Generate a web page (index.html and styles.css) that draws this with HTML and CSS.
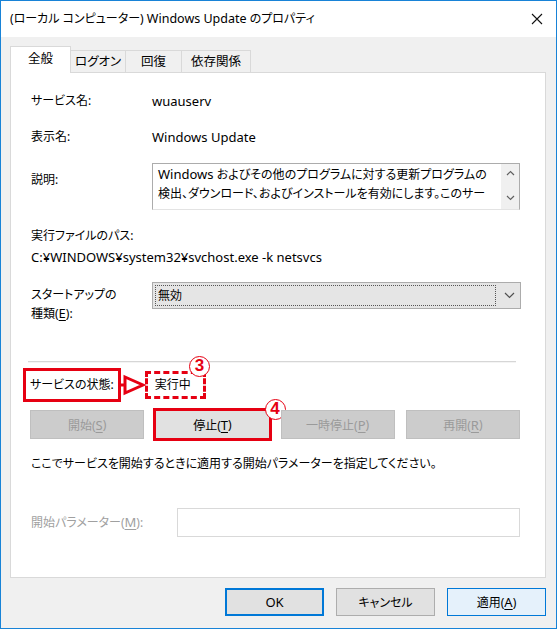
FILE: index.html
```html
<!DOCTYPE html>
<html lang="ja">
<head>
<meta charset="utf-8">
<title>Windows Update のプロパティ</title>
<link rel="stylesheet" href="styles.css">
</head>
<body>
<div class="window">
  <div class="titlebar">
    <span class="title">(ローカル コンピューター) <span class="en">Windows Update</span> のプロパティ</span>
    <svg class="close" width="12" height="12" viewBox="0 0 12 12"><path d="M1 1L11 11M11 1L1 11" stroke="#111" stroke-width="1.1" fill="none"/></svg>
  </div>
  <div class="client">
    <div class="tabs">
      <div class="tab tab-active">全般</div>
      <div class="tab tab-logon">ログオン</div>
      <div class="tab tab-recover">回復</div>
      <div class="tab tab-deps">依存関係</div>
    </div>
    <div class="panel">
      <div class="row row-name">
        <span class="label">サービス名:</span>
        <span class="value en">wuauserv</span>
      </div>
      <div class="row row-display">
        <span class="label">表示名:</span>
        <span class="value en">Windows Update</span>
      </div>
      <div class="row row-desc">
        <span class="label label-desc">説明:</span>
        <div class="textarea">
          <div class="textarea-text"><span class="en">Windows</span> およびその他のプログラムに対する更新プログラムの<br>検出、ダウンロード、およびインストールを有効にします。このサー</div>
          <div class="scrollbar">
            <svg width="9" height="6" viewBox="0 0 9 6"><path d="M1 5L4.5 1.5L8 5" stroke="#606060" stroke-width="1.2" fill="none"/></svg>
            <svg width="9" height="6" viewBox="0 0 9 6"><path d="M1 1L4.5 4.5L8 1" stroke="#606060" stroke-width="1.2" fill="none"/></svg>
          </div>
        </div>
      </div>
      <div class="row row-pathlabel">実行ファイルのパス:</div>
      <div class="row row-path en">C:¥WINDOWS¥system32¥svchost.exe -k netsvcs</div>
      <div class="row row-startup">
        <span class="label label-2line">スタートアップの<br>種類(<u class="en">E</u>):</span>
        <div class="select">
          <div class="select-focus">無効</div>
          <svg class="select-arrow" width="11" height="7" viewBox="0 0 11 7"><path d="M1 1L5.5 5.5L10 1" stroke="#505050" stroke-width="1.2" fill="none"/></svg>
        </div>
      </div>
      <div class="separator"></div>
      <div class="row row-status">
        <span class="status-label">サービスの状態:</span>
        <span class="status-value">実行中</span>
        <svg class="arrow" width="28" height="22" viewBox="0 0 28 22"><path d="M1 11H7M7 3L25 11L7 19Z" stroke="#e60012" stroke-width="3" fill="#fff" stroke-linejoin="miter"/></svg>
        <span class="badge badge-3">3</span>
      </div>
      <div class="buttons">
        <div class="btn btn-disabled">開始(<u class="en">S</u>)</div>
        <div class="btn btn-enabled btn-marked">停止(<u class="en">T</u>)<span class="badge badge-4">4</span></div>
        <div class="btn btn-disabled">一時停止(<u class="en">P</u>)</div>
        <div class="btn btn-disabled">再開(<u class="en">R</u>)</div>
      </div>
      <div class="row row-hint">ここでサービスを開始するときに適用する開始パラメーターを指定してください。</div>
      <div class="row row-param">
        <span class="label label-param">開始パラメーター(<u class="en">M</u>):</span>
        <div class="input"></div>
      </div>
    </div>
    <div class="footer">
      <div class="fbtn fbtn-ok en">OK</div>
      <div class="fbtn">キャンセル</div>
      <div class="fbtn fbtn-apply">適用(<u class="en">A</u>)</div>
    </div>
  </div>
</div>
</body>
</html>
```
FILE: styles.css
```css
* { box-sizing: border-box; }
html, body { margin: 0; padding: 0; background: #ffffff; }
body {
  font-family: "Noto Sans", "Noto Sans CJK JP", sans-serif;
  font-size: 12px;
  font-feature-settings: "palt";
  color: #000;
}
.en { font-size: 13px; }
u { text-decoration-thickness: 1px; text-underline-offset: 2px; }
.window {
  width: 557px;
  height: 629px;
  border: 1px solid #1883d7;
  display: flex;
  flex-direction: column;
  background: #f0f0f0;
}
.titlebar {
  height: 36px;
  background: #fff;
  display: flex;
  align-items: center;
  justify-content: space-between;
  padding: 0 13px 0 9px;
  flex: none;
}
.title { font-size: 12px; line-height: 16px; }
.title .en { font-size: 12.5px; }
.close { display: block; }
.client {
  flex: 1;
  padding: 9px 10px 0 9px;
  display: flex;
  flex-direction: column;
}
.tabs {
  display: flex;
  align-items: flex-end;
  height: 26px;
  position: relative;
  z-index: 1;
}
.tab {
  height: 22px;
  border: 1px solid #d9d9d9;
  border-bottom: none;
  background: #f0f0f0;
  display: flex;
  align-items: center;
  justify-content: center;
  line-height: 16px;
  margin-left: -1px;
  font-size: 12.5px;
}
.tab-active {
  height: 27px;
  width: 61px;
  background: #fff;
  margin-left: 0;
  margin-bottom: -1px;
  padding-bottom: 3px;
}
.tab-logon { width: 56px; }
.tab-recover { width: 57px; }
.tab-deps { width: 70px; }
.panel {
  height: 506px;
  background: #fff;
  border: 1px solid #d9d9d9;
  padding: 0 25px 0 20px;
  display: flex;
  flex-direction: column;
  flex: none;
}
.row { display: flex; line-height: 16px; }
.label { width: 121px; flex: none; }
.value { flex: 1; }
.row-name { margin-top: 20px; }
.row-display { margin-top: 20px; }
.row-desc { margin-top: 18px; align-items: flex-start; height: 47px; }
.label-desc { padding-top: 9px; }
.textarea {
  flex: 1;
  height: 47px;
  border: 1px solid #acacac;
  border-bottom-color: #e3e3e3;
  display: flex;
}
.textarea-text {
  flex: 1;
  padding: 1px 0 0 5px;
  line-height: 19px;
  white-space: nowrap;
  overflow: hidden;
}
.scrollbar {
  width: 18px;
  background: #f0f0f0;
  display: flex;
  flex-direction: column;
  align-items: center;
  justify-content: space-between;
  padding: 6px 0 8px;
}
.scrollbar svg { display: block; }
.row-pathlabel { margin-top: 18px; }
.row-path { margin-top: 5px; }
.row-startup { margin-top: 18px; align-items: flex-start; }
.label-2line { line-height: 19px; padding-top: 2px; }
.select {
  flex: 1;
  height: 27px;
  margin-right: -1px;
  margin-top: -1px;
  background: #e5e5e5;
  border: 1px solid #acacac;
  display: flex;
  align-items: center;
  padding: 2px;
}
.select-focus {
  width: 341px;
  height: 21px;
  border: 1px dotted #555;
  padding-left: 2px;
  line-height: 19px;
}
.select-arrow { margin-left: 8px; display: block; }
.separator {
  margin: 38px 4px 0 -3px;
  border-top: 1px solid #d6d6d6;
  border-bottom: 1px solid #f4f4f4;
}
.row-status {
  margin-top: 5px;
  height: 34px;
  align-items: center;
  position: relative;
}
.status-label {
  margin-left: -8px;
  height: 34px;
  border: 3px solid #e60012;
  padding: 0 4px 0 4px;
  display: flex;
  align-items: center;
  white-space: nowrap;
  flex: none;
}
.status-value {
  margin-left: 24px;
  height: 28px;
  width: 61px;
  border: 3px dashed #e60012;
  padding-left: 7px;
  display: flex;
  align-items: center;
  flex: none;
}
.arrow {
  position: absolute;
  left: 87px;
  top: 6px;
  display: block;
}
.badge {
  position: absolute;
  width: 21px;
  height: 21px;
  border: 1.5px solid #e60012;
  border-radius: 50%;
  background: #fff;
  color: #e60012;
  font-family: "Liberation Sans", sans-serif;
  font-weight: bold;
  font-size: 17px;
  line-height: 18px;
  text-align: center;
}
.badge-3 { left: 158px; top: -12px; }
.badge-4 { right: -17px; top: -12px; }
.buttons {
  margin-top: 8px;
  margin-left: -1px;
  display: flex;
  gap: 11px;
}
.btn {
  flex: 1;
  height: 29px;
  display: flex;
  align-items: center;
  justify-content: center;
  position: relative;
}
.btn-disabled {
  background: #cccccc;
  border: 1px solid #bfbfbf;
  color: #9a9a9a;
}
.btn-enabled {
  background: #e1e1e1;
  border: 1px solid #adadad;
}
.btn-marked { outline: 3px solid #e60012; outline-offset: -1px; }
.row-hint { margin-top: 17px; white-space: nowrap; }
.row-param { margin-top: 36px; align-items: center; }
.label-param { width: 146px; color: #a0a0a0; }
.input {
  flex: 1;
  height: 29px;
  border: 1px solid #d9d9d9;
  background: #fff;
}
.footer {
  margin-top: 10px;
  display: flex;
  justify-content: flex-end;
  gap: 12px;
}
.fbtn {
  width: 99px;
  height: 28px;
  background: #e1e1e1;
  border: 1px solid #adadad;
  display: flex;
  align-items: center;
  justify-content: center;
}
.fbtn-ok { border: 2px solid #0078d7; }
.fbtn-apply { background: #e5f1fb; border-color: #0078d7; }
```
